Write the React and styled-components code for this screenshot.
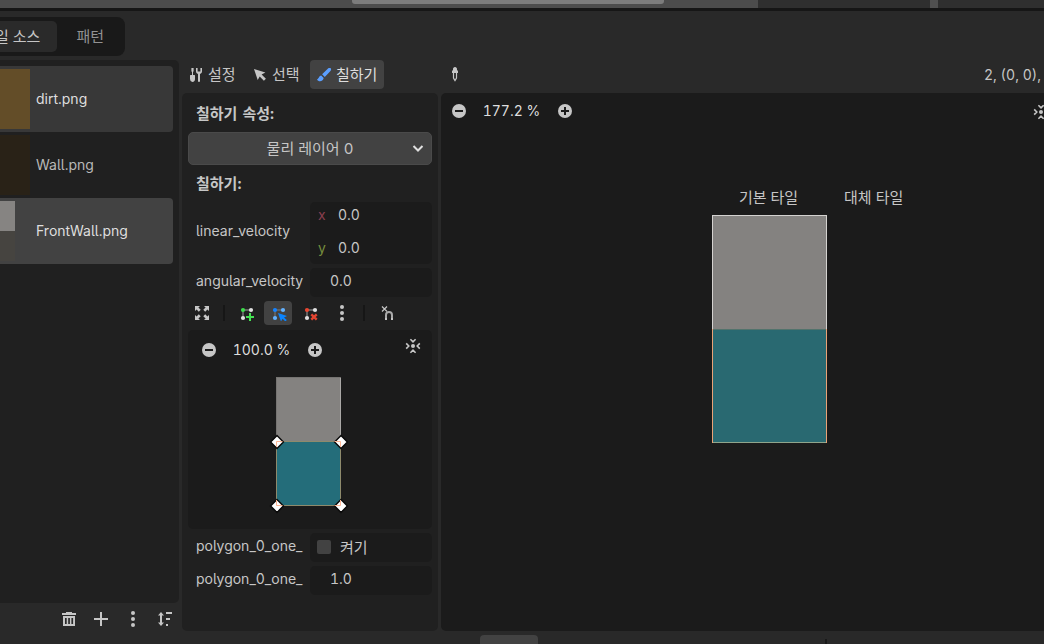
import React from 'react'
import styled, {createGlobalStyle} from 'styled-components'

const SOURCES = [
    {name: 'dirt.png', state: 'hover', thumb: 'dirt'},
    {name: 'Wall.png', state: 'normal', thumb: 'wall'},
    {name: 'FrontWall.png', state: 'selected', thumb: 'front'},
]

const Icon = ({size = 16, children}) => (
    <svg width={size} height={size} viewBox="0 0 16 16" fill="#c6c6c6">{children}</svg>
)

const ToolsIcon = () => (
    <Icon>
        <path d="M3.4 1h2.2v3.2l-.6.8v3h1.5c.3 0 .5.3.5.6V12a3 3 0 0 1-2.6 3 3 3 0 0 1-2.4-3V8.600c0-.3.2-.6.5-.6H4V5l-.6-.8z" />
        <path d="M8 1v3.200c0 1.300.8 2.300 2 2.800v7q0 1 1 1t1-1V7c1.200-.5 2-1.500 2-2.800V1h-1.600v3.500h-2.800V1z" />
    </Icon>
)
const SelectIcon = () => (
    <Icon><path d="M2 2l3.700 11 2-3.500 4.200 4.300 2-2-4.300-4.200L13.400 5.500z" /></Icon>
)
const BrushIcon = () => (
    <Icon>
        <g fill="#5b9fff">
            <path d="M14.700 1.300c-.7-.6-1.700-.5-2.400 0L6.100 7.200l2.700 2.700 5.900-6.200c.5-.7.6-1.700 0-2.400z" />
            <path d="M5.200 8.500C3 8.700 3.300 11.200 1 12.400c1.100 2.500 5.700 2.800 6.700-1.300z" />
        </g>
    </Icon>
)
const PickerIcon = () => (
    <Icon>
        <path d="M8 1C6.700 1 6 2 6 3v1.500H5V7h6V4.500h-1V3c0-1-.7-2-2-2z" />
        <path d="M6.500 7v5L8 14.500 9.500 12V7" fill="none" stroke="#c6c6c6" strokeWidth="1.200" />
    </Icon>
)
const ExpandIcon = () => (
    <Icon>
        <path d="M1 1h5L4.400 2.600l2.300 2.200-1.900 1.900-2.200-2.300L1 6zM15 1v5l-1.600-1.600-2.200 2.300-1.900-1.900 2.300-2.200L10 1zM1 15v-5l1.600 1.600 2.200-2.300 1.900 1.900-2.300 2.200L6 15zM15 15h-5l1.600-1.600-2.300-2.200 1.900-1.900 2.200 2.300L15 10z" />
    </Icon>
)
const PolygonIcon = ({first, other = '#e0e0e0', children}) => (
    <Icon>
        <path d="M4 13V5h8" fill="none" stroke="#606060" strokeWidth="2" />
        <circle cx="4" cy="5" r="2.100" fill={first} />
        <circle cx="12" cy="5" r="2.100" fill={other} />
        <circle cx="4" cy="13" r="2.100" fill={other} />
        {children}
    </Icon>
)
const DotsIcon = () => (
    <Icon><circle cx="8" cy="2" r="2" /><circle cx="8" cy="8" r="2" /><circle cx="8" cy="14" r="2" /></Icon>
)
const SnapIcon = () => (
    <Icon>
        <path d="M2 1.500l5 5M7 1.500l-5 5" stroke="#c6c6c6" strokeWidth="1.200" />
        <path d="M6 14V10a3 3 0 0 1 6 0v4" fill="none" stroke="#aaa" strokeWidth="2" />
        <path d="M5 13h2v2H5zM11 13h2v2h-2z" />
    </Icon>
)
const ZoomIcon = ({plus}) => (
    <Icon>
        <circle cx="8" cy="8" r="7" />
        <path d={plus ? 'M4 8h8M8 4v8' : 'M4 8h8'} stroke="#1b1b1b" strokeWidth="2" />
    </Icon>
)
const CenterIcon = () => (
    <Icon>
        <circle cx="8" cy="8" r="2" />
        <g fill="none" stroke="#c6c6c6" strokeWidth="1.600">
            <path d="M5.400 1.200L8 3.800l2.600-2.600M5.400 14.800L8 12.200l2.600 2.600M1.200 5.400L3.800 8l-2.600 2.600M14.800 5.400L12.200 8l2.600 2.600" />
        </g>
    </Icon>
)
const TrashIcon = () => (
    <Icon>
        <path d="M5 1h6v1h4v2H1V2h4z" />
        <path d="M2 5h12v10H2zM4 7v6h1.700V7zM7.200 7v6h1.700V7zM10.400 7v6h1.700V7z" fillRule="evenodd" />
    </Icon>
)
const AddIcon = () => (
    <Icon><path d="M7 1h2v6h6v2H9v6H7V9H1V7h6z" /></Icon>
)
const SortIcon = () => (
    <Icon>
        <path d="M4 1l3 3.500H5v7h2L4 15l-3-3.500h2v-7H1zM9 1h6v2H9zM9 7h4v2H9zM9 13h2v2H9z" />
    </Icon>
)

const Zoom = ({value}) => (
    <ZoomBar>
        <ZoomIcon />
        <ZoomValue>{value}</ZoomValue>
        <ZoomIcon plus />
    </ZoomBar>
)

const handles = [[10, 75], [74, 75], [10, 139], [74, 139]]

const PolygonShape = () => (
    <svg width="84" height="150">
        <rect x="9.500" y="10.500" width="64" height="65" fill="#848280" stroke="#767472" />
        <path d="M73.500 11v64" stroke="#aaa8a6" />
        <rect x="9.500" y="74.500" width="64" height="64" fill="#246d7a" stroke="#8e8a6c" />
        {handles.map(([x, y]) => (
            <path key={`${x}-${y}`} d={`M${x} ${y - 6.4}l6.400 6.400-6.400 6.400-6.400-6.400z`} fill="#fff" stroke="#080808" strokeWidth="1.400" />
        ))}
        <g fill="none" stroke="#ffb796">
            <path d="M9.500 80v-5.500h6M67.500 74.500h6v5.500M9.500 133v5.500h6M67.500 138.500h6v-5.500" />
        </g>
    </svg>
)

const TileShape = () => (
    <svg width="115" height="228">
        <rect x=".5" y=".5" width="114" height="114" fill="#848280" stroke="#d4d2d0" />
        <rect y="114" width="115" height="114" fill="#296971" />
        <path d="M0 114.500h115" stroke="#52736c" />
        <path d="M0 227.500h115" stroke="#8fa58c" />
        <path d="M.5 114v114M114.500 114v114" stroke="#e9a277" />
    </svg>
)

const App = () => {
    return (
        <Page>
            <GlobalStyle />
            <ViewportEdge>
                <ScrollGrabber />
                <Splitter />
            </ViewportEdge>
            <Tabs>
                <Tab $active>타일 소스</Tab>
                <Tab>패턴</Tab>
            </Tabs>
            <Body>
                <SourceColumn>
                    <SourceList>
                        {SOURCES.map(source => (
                            <SourceItem key={source.name} $state={source.state}>
                                <Thumb $kind={source.thumb} />
                                {source.name}
                            </SourceItem>
                        ))}
                    </SourceList>
                    <SourceActions>
                        <TrashIcon />
                        <AddIcon />
                        <DotsIcon />
                        <SortIcon />
                    </SourceActions>
                </SourceColumn>
                <PaintColumn>
                    <Toolbar>
                        <ToolButton><ToolsIcon />설정</ToolButton>
                        <ToolButton><SelectIcon />선택</ToolButton>
                        <ToolButton $active><BrushIcon />칠하기</ToolButton>
                    </Toolbar>
                    <PaintPanel>
                        <Heading>칠하기 속성:</Heading>
                        <Dropdown>
                            <span>물리 레이어 0</span>
                            <svg width="12" height="8" fill="none" stroke="#e0e0e0" strokeWidth="2">
                                <path d="M1.500 1L6 5.500 10.500 1" />
                            </svg>
                        </Dropdown>
                        <Heading $low>칠하기:</Heading>
                        <Property $height={62}>
                            <Label>linear_velocity</Label>
                            <VectorField>
                                <div><Axis $color="#8a3f4f">x</Axis>0.0</div>
                                <div><Axis $color="#768e3e">y</Axis>0.0</div>
                            </VectorField>
                        </Property>
                        <Property>
                            <Label>angular_velocity</Label>
                            <NumberField>0.0</NumberField>
                        </Property>
                        <PolygonTools>
                            <PolygonTool><ExpandIcon /></PolygonTool>
                            <Separator />
                            <PolygonTool $shift={1}>
                                <PolygonIcon first="#3ddc4b">
                                    <path d="M10 8h2v3h3v2h-3v3h-2v-3H7v-2h3z" fill="#45e052" />
                                </PolygonIcon>
                            </PolygonTool>
                            <PolygonTool $active $shift={1}>
                                <PolygonIcon first="#1583ff" other="#62b1ff">
                                    <path d="M7 8l9 3-3 1.400 2.800 2.700-1.400 1.400-2.800-2.800L10 16.500z" fill="#0a84ff" />
                                </PolygonIcon>
                            </PolygonTool>
                            <PolygonTool $shift={1}>
                                <PolygonIcon first="#ea4630">
                                    <path d="M8.300 9.300l5.400 5.400M13.700 9.300l-5.400 5.400" stroke="#e34430" strokeWidth="2.400" />
                                </PolygonIcon>
                            </PolygonTool>
                            <PolygonTool><DotsIcon /></PolygonTool>
                            <Separator />
                            <PolygonTool $shift={3}><SnapIcon /></PolygonTool>
                        </PolygonTools>
                        <PolygonView>
                            <ViewHeader>
                                <Zoom value="100.0 %" />
                                <CenterIcon />
                            </ViewHeader>
                            <PolygonShape />
                        </PolygonView>
                        <Property>
                            <Label>polygon_0_one_</Label>
                            <CheckField><CheckBox />켜기</CheckField>
                        </Property>
                        <Property>
                            <Label>polygon_0_one_</Label>
                            <NumberField>1.0</NumberField>
                        </Property>
                    </PaintPanel>
                </PaintColumn>
                <AtlasColumn>
                    <AtlasToolbar>
                        <PickerIcon />
                        <TileInfo>2, (0, 0),</TileInfo>
                    </AtlasToolbar>
                    <AtlasView>
                        <AtlasHeader>
                            <Zoom value="177.2 %" />
                            <CenterIcon />
                        </AtlasHeader>
                        <TileGroups>
                            <TileGroup>
                                <Caption>기본 타일</Caption>
                                <TileShape />
                            </TileGroup>
                            <TileGroup>대체 타일</TileGroup>
                        </TileGroups>
                    </AtlasView>
                </AtlasColumn>
            </Body>
            <BottomBar>
                <BottomTab />
                <BottomDivider />
            </BottomBar>
        </Page>
    )
}

export default App

const GlobalStyle = createGlobalStyle`
    body {
        margin: 0;
        overflow: hidden;
        background: #292929;
    }
    * {
        box-sizing: border-box;
    }
    svg {
        display: block;
        flex: none;
    }
`
const Page = styled.div`
    display: flex;
    flex-direction: column;
    width: 1044px;
    height: 644px;
    overflow: hidden;
    background: #292929;
    color: #c6c6c6;
    font: 14px/20px Inter, 'Noto Sans CJK KR', sans-serif;
    font-feature-settings: 'cv05', 'tnum';
    white-space: nowrap;
`
const ViewportEdge = styled.div`
    display: flex;
    flex: none;
    height: 11px;
    border-bottom: 3px solid #161616;
    background: linear-gradient(90deg, #4c4c4c 758px, #2f2f2f 758px);
`
const ScrollGrabber = styled.div`
    width: 312px;
    height: 4px;
    margin-left: 352px;
    border-radius: 0 0 3px 3px;
    background: #7c7c7c;
`
const Splitter = styled.div`
    width: 8px;
    height: 8px;
    margin-left: 266px;
    background: #505050;
`
const Tabs = styled.div`
    display: flex;
    justify-content: flex-end;
    flex: none;
    width: 125px;
    height: 39px;
    margin: 6px 0 4px;
    padding: 4px;
    border-radius: 0 8px 8px 0;
    background: #191919;
    font-size: 15px;
`
const Tab = styled.div`
    flex: none;
    padding: 6px 17px 5px 16px;
    margin-right: ${({$active}) => ($active ? '3px' : 0)};
    border-radius: 5px;
    background: ${({$active}) => ($active ? '#2a2a2a' : 'transparent')};
    color: ${({$active}) => ($active ? '#c6c6c6' : '#929292')};
`
const Body = styled.div`
    display: flex;
    gap: 3px;
    height: 571px;
`
const SourceColumn = styled.div`
    width: 179px;
`
const SourceList = styled.div`
    height: 543px;
    padding: 6px 6px 0 0;
    border-radius: 0 5px 5px 0;
    background: #202020;
`
const itemColors = {normal: 'transparent', hover: '#383838', selected: '#424242'}
const SourceItem = styled.div`
    display: flex;
    align-items: center;
    gap: 6px;
    height: 66px;
    border-radius: 0 4px 4px 0;
    background: ${({$state}) => itemColors[$state]};
    color: ${({$state}) => ($state === 'normal' ? '#b8b8b8' : '#dedede')};
`
const thumbs = {
    dirt: '#634d28',
    wall: '#292217',
    front: 'linear-gradient(#868482 50%, #464440 50%) no-repeat 0 0 / 15px 60px',
}
const Thumb = styled.div`
    width: 30px;
    height: 60px;
    background: ${({$kind}) => thumbs[$kind]};
`
const SourceActions = styled.div`
    display: flex;
    justify-content: flex-end;
    gap: 16px;
    padding: 8px 6px;
`
const PaintColumn = styled.div`
    width: 256px;
`
const Toolbar = styled.div`
    display: flex;
    gap: 4px;
    height: 33px;
    font-size: 15px;
`
const ToolButton = styled.div`
    display: flex;
    align-items: center;
    gap: 4px;
    height: 29px;
    width: ${({$active}) => ($active ? '74px' : '60px')};
    padding-left: 6px;
    border-radius: 4px;
    background: ${({$active}) => ($active ? '#424242' : 'transparent')};
    color: ${({$active}) => ($active ? '#dedede' : '#c6c6c6')};
`
const PaintPanel = styled.div`
    height: 538px;
    padding: 6px;
    border-radius: 5px;
    background: #202020;
`
const Heading = styled.div`
    height: ${({$low}) => ($low ? '37px' : '33px')};
    padding: ${({$low}) => ($low ? '9px' : '5px')} 8px 0;
    font-size: 15px;
    font-weight: 700;
    word-spacing: 1px;
`
const Dropdown = styled.div`
    display: flex;
    align-items: center;
    height: 33px;
    padding: 0 7px 0 19px;
    border: 1px solid #4a4a4a;
    border-radius: 5px;
    background: #424242;
    font-size: 15px;

    span {
        flex: 1;
        text-align: center;
    }
`
const Property = styled.div`
    display: flex;
    align-items: center;
    height: ${({$height}) => $height || 29}px;
    margin-bottom: 4px;
`
const Label = styled.div`
    width: 122px;
    padding: 0 7px 4px 8px;
    overflow: hidden;
`
const Field = styled.div`
    display: flex;
    align-items: center;
    width: 122px;
    height: 100%;
    border-radius: 5px;
    background: #1b1b1b;
`
const VectorField = styled(Field)`
    flex-direction: column;
    align-items: stretch;

    div {
        display: flex;
        flex: none;
        height: 33px;
        padding: 3px 8px;
    }
`
const Axis = styled.span`
    width: 20px;
    color: ${({$color}) => $color};
`
const NumberField = styled(Field)`
    padding: 0 20px 3px;
`
const CheckField = styled(Field)`
    gap: 9px;
    padding-left: 7px;
    font-size: 15px;
`
const CheckBox = styled.div`
    width: 14px;
    height: 14px;
    margin-top: -1px;
    border-radius: 2px;
    background: #424242;
`
const PolygonTools = styled.div`
    display: flex;
    align-items: center;
    gap: 4px;
    height: 24px;
    margin-bottom: 5px;
`
const PolygonTool = styled.div`
    display: flex;
    align-items: center;
    justify-content: center;
    width: 28px;
    height: 24px;
    padding-left: ${({$shift}) => $shift || 0}px;
    border-radius: 4px;
    background: ${({$active}) => ($active ? '#424242' : 'transparent')};
`
const Separator = styled.div`
    width: 2px;
    height: 16px;
    margin: 0 3px;
    background: #161616;
`
const PolygonView = styled.div`
    display: flex;
    flex-direction: column;
    height: 199px;
    margin-bottom: 4px;
    border-radius: 5px;
    background: #1b1b1b;

    > svg {
        margin: -3px 0 0 79px;
    }
`
const ViewHeader = styled.div`
    display: flex;
    justify-content: space-between;
    height: 40px;
    padding: 8px 11px 0 13px;
`
const ZoomBar = styled.div`
    display: flex;
    align-items: center;
    height: 24px;
`
const ZoomValue = styled.div`
    width: 90px;
    padding-right: 1px;
    text-align: center;
    color: #dedede;
`
const AtlasColumn = styled.div`
    width: 603px;
`
const AtlasToolbar = styled.div`
    display: flex;
    align-items: center;
    justify-content: space-between;
    height: 33px;
    padding: 0 3px 5px 6px;
`
const TileInfo = styled.div`
    padding-top: 1px;
`
const AtlasView = styled.div`
    height: 538px;
    border-radius: 5px 0 0 5px;
    background: #1b1b1b;
    overflow: hidden;
`
const AtlasHeader = styled.div`
    display: flex;
    align-items: center;
    gap: 460px;
    height: 36px;
    padding-left: 10px;

    > svg {
        margin-top: 2px;
    }
`
const TileGroups = styled.div`
    display: flex;
    gap: 17px;
    padding: 59px 0 0 271px;
    font-size: 15px;
`
const TileGroup = styled.div`
    display: flex;
    flex-direction: column;
    align-items: center;
    gap: 7px;
`
const Caption = styled.div`
    padding-right: 2px;
`
const BottomBar = styled.div`
    display: flex;
    height: 9px;
    margin-top: 4px;
`
const BottomTab = styled.div`
    width: 58px;
    height: 9px;
    margin-left: 480px;
    border-radius: 4px 4px 0 0;
    background: #424242;
`
const BottomDivider = styled.div`
    width: 2px;
    height: 5px;
    margin: 4px 0 0 287px;
    background: #191919;
`
